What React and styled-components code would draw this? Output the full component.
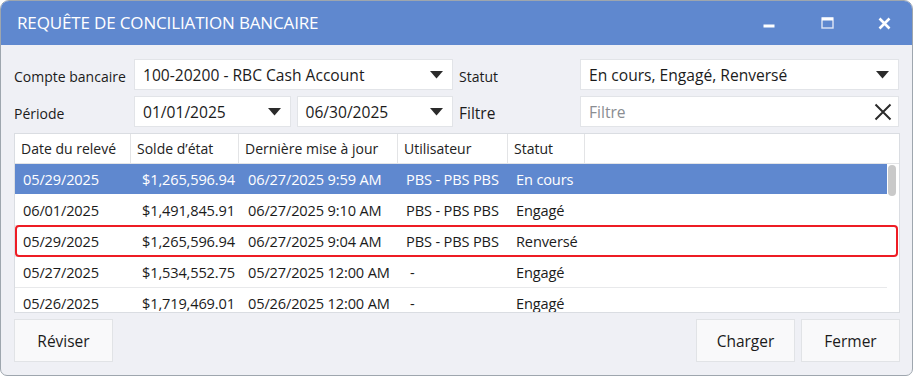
import React from 'react';
import styled, { createGlobalStyle } from 'styled-components';

const GlobalStyle = createGlobalStyle`
  html, body {
    margin: 0;
    padding: 0;
    background: #ffffff;
  }
  * { box-sizing: border-box; }
`;

const FONT = `"Open Sans", "Noto Sans", "Liberation Sans", sans-serif`;

const Window = styled.div`
  width: 913px;
  height: 376px;
  display: flex;
  flex-direction: column;
  background: #eff0f5;
  border: 1px solid #9ea6ae;
  border-radius: 9px 9px 7px 7px;
  overflow: hidden;
  font-family: ${FONT};
  color: #1b1b1b;
`;

const TitleBar = styled.div`
  height: 44px;
  flex: none;
  display: flex;
  align-items: center;
  background: #5f88cf;
  padding-left: 16px;
`;

const Title = styled.div`
  flex: 1;
  color: #ffffff;
  font-size: 17px;
  letter-spacing: -0.15px;
  margin-top: -1px;
`;

const WinButton = styled.div`
  width: ${p => p.$w || 58}px;
  height: 44px;
  display: flex;
  align-items: center;
  justify-content: center;
`;

const Body = styled.div`
  flex: 1;
  min-height: 0;
  display: flex;
  flex-direction: column;
  padding: 14px 12px 13px 13px;
`;

const Form = styled.div`
  display: grid;
  grid-template-columns: 120px 319px 127px 319px;
  grid-auto-rows: 31px;
  row-gap: 6px;
  align-items: center;
`;

const Label = styled.div`
  font-size: ${p => (p.$big ? '15.5px' : '14px')};
  padding-left: ${p => (p.$indent ? '6px' : '0')};
  padding-top: 3px;
  white-space: nowrap;
`;

const Field = styled.div`
  height: 31px;
  flex: ${p => (p.$grow ? 1 : 'none')};
  display: flex;
  align-items: center;
  background: #ffffff;
  border: 1px solid #e2e4e8;
  padding: 0 ${p => (p.$clear ? 6 : 9)}px 0 8px;
  font-size: 15.6px;
  color: ${p => (p.$placeholder ? '#8a8d92' : '#1b1b1b')};
`;

const FieldText = styled.span`
  flex: 1;
  white-space: nowrap;
`;

const Pair = styled.div`
  display: flex;
  gap: 6px;
`;

const Table = styled.div`
  flex: 1;
  min-height: 0;
  margin-top: 6px;
  display: flex;
  flex-direction: column;
  background: #ffffff;
  border: 1px solid #dadde2;
  overflow: hidden;
`;

const COLS = '116px 108px 159px 110px 77px 1fr 12px';

const HeaderRow = styled.div`
  display: grid;
  grid-template-columns: ${COLS};
  height: 30px;
  flex: none;
  border-bottom: 1px solid #e3e4e6;
`;

const HeadCell = styled.div`
  display: flex;
  align-items: center;
  padding-left: 6px;
  font-size: 14px;
  color: #222;
  border-right: ${p => (p.$last ? 'none' : '1px solid #e3e4e6')};
  white-space: nowrap;
`;

const Rows = styled.div`
  flex: 1;
  min-height: 0;
  display: grid;
  grid-template-columns: 1fr 12px;
  overflow: hidden;
`;

const RowList = styled.div`
  display: flex;
  flex-direction: column;
`;

const Row = styled.div`
  position: relative;
  display: grid;
  grid-template-columns: 116px 108px 159px 110px 77px 1fr;
  height: 31px;
  flex: none;
  background: ${p => (p.$selected ? '#5f88cf' : '#ffffff')};
  color: ${p => (p.$selected ? '#ffffff' : '#1b1b1b')};
  border-bottom: 1px solid ${p => (p.$selected ? '#ffffff' : '#e8e9eb')};
  font-size: 14.6px;
  letter-spacing: -0.15px;

  ${p =>
    p.$flagged &&
    `
    &::after {
      content: '';
      position: absolute;
      left: 0;
      right: -11px;
      top: -1px;
      bottom: -1px;
      border: 2.5px solid #ee1c24;
      border-radius: 4px;
      pointer-events: none;
    }
  `}
`;

const Cell = styled.div`
  display: flex;
  align-items: center;
  padding-left: ${p => p.$pad || 8}px;
  white-space: nowrap;
`;

const ScrollTrack = styled.div`
  background: #ffffff;
  padding: 1px 2px 0 1px;
`;

const ScrollThumb = styled.div`
  height: 31px;
  width: 8px;
  border-radius: 4px;
  background: #c9c9c9;
`;

const Footer = styled.div`
  display: flex;
  flex: none;
  margin-top: 6px;
  gap: 6px;
`;

const Button = styled.div`
  width: 99px;
  height: 43px;
  display: flex;
  align-items: center;
  justify-content: center;
  background: #f9f9fa;
  border: 1px solid #e1e3e6;
  font-size: 15.5px;
  color: #1b1b1b;
  margin-right: ${p => (p.$push ? 'auto' : '0')};
`;

const Caret = () => (
  <svg width="13" height="8" viewBox="0 0 13 8">
    <path d="M0 0 H13 L6.5 7.5 Z" fill="#2b2b2b" />
  </svg>
);

const ClearIcon = () => (
  <svg width="18" height="18" viewBox="0 0 18 18">
    <path d="M1.5 1.5 L16.5 16.5 M16.5 1.5 L1.5 16.5" stroke="#2b2b2b" strokeWidth="2" />
  </svg>
);

const MinIcon = () => (
  <svg width="12" height="12" viewBox="0 0 12 12">
    <rect x="0.5" y="7.5" width="11" height="3" fill="#ffffff" />
  </svg>
);

const MaxIcon = () => (
  <svg width="13" height="12" viewBox="0 0 13 12">
    <rect x="1" y="1" width="11" height="10" fill="none" stroke="#dfe6f5" strokeWidth="1.4" />
    <rect x="1" y="0.5" width="11" height="3" fill="#ffffff" />
  </svg>
);

const CloseIcon = () => (
  <svg width="13" height="13" viewBox="0 0 13 13">
    <path d="M1.5 1.5 L11.5 11.5 M11.5 1.5 L1.5 11.5" stroke="#ffffff" strokeWidth="2.6" />
  </svg>
);

const rows = [
  { date: '05/29/2025', solde: '$1,265,596.94', maj: '06/27/2025 9:59 AM', user: 'PBS - PBS PBS', statut: 'En cours', selected: true },
  { date: '06/01/2025', solde: '$1,491,845.91', maj: '06/27/2025 9:10 AM', user: 'PBS - PBS PBS', statut: 'Engagé' },
  { date: '05/29/2025', solde: '$1,265,596.94', maj: '06/27/2025 9:04 AM', user: 'PBS - PBS PBS', statut: 'Renversé', flagged: true },
  { date: '05/27/2025', solde: '$1,534,552.75', maj: '05/27/2025 12:00 AM', user: '-', statut: 'Engagé' },
  { date: '05/26/2025', solde: '$1,719,469.01', maj: '05/26/2025 12:00 AM', user: '-', statut: 'Engagé' },
];

const headers = ['Date du relevé', 'Solde d’état', 'Dernière mise à jour', 'Utilisateur', 'Statut'];

export default function App() {
  return (
    <>
      <GlobalStyle />
      <Window>
        <TitleBar>
          <Title>REQUÊTE DE CONCILIATION BANCAIRE</Title>
          <WinButton><MinIcon /></WinButton>
          <WinButton><MaxIcon /></WinButton>
          <WinButton $w={56}><CloseIcon /></WinButton>
        </TitleBar>

        <Body>
          <Form>
            <Label>Compte bancaire</Label>
            <Field>
              <FieldText>100-20200 - RBC Cash Account</FieldText>
              <Caret />
            </Field>
            <Label $indent>Statut</Label>
            <Field>
              <FieldText>En cours, Engagé, Renversé</FieldText>
              <Caret />
            </Field>

            <Label>Période</Label>
            <Pair>
              <Field $grow>
                <FieldText>01/01/2025</FieldText>
                <Caret />
              </Field>
              <Field $grow>
                <FieldText>06/30/2025</FieldText>
                <Caret />
              </Field>
            </Pair>
            <Label $indent $big>Filtre</Label>
            <Field $placeholder $clear>
              <FieldText>Filtre</FieldText>
              <ClearIcon />
            </Field>
          </Form>

          <Table>
            <HeaderRow>
              {headers.map(h => (
                <HeadCell key={h}>{h}</HeadCell>
              ))}
              <HeadCell $last />
              <HeadCell $last />
            </HeaderRow>
            <Rows>
              <RowList>
                {rows.map((r, i) => (
                  <Row key={i} $selected={r.selected} $flagged={r.flagged}>
                    <Cell>{r.date}</Cell>
                    <Cell $pad={11}>{r.solde}</Cell>
                    <Cell $pad={9}>{r.maj}</Cell>
                    <Cell $pad={r.user === '-' ? 12 : 8}>{r.user}</Cell>
                    <Cell>{r.statut}</Cell>
                    <Cell />
                  </Row>
                ))}
              </RowList>
              <ScrollTrack>
                <ScrollThumb />
              </ScrollTrack>
            </Rows>
          </Table>

          <Footer>
            <Button $push>Réviser</Button>
            <Button>Charger</Button>
            <Button>Fermer</Button>
          </Footer>
        </Body>
      </Window>
    </>
  );
}
